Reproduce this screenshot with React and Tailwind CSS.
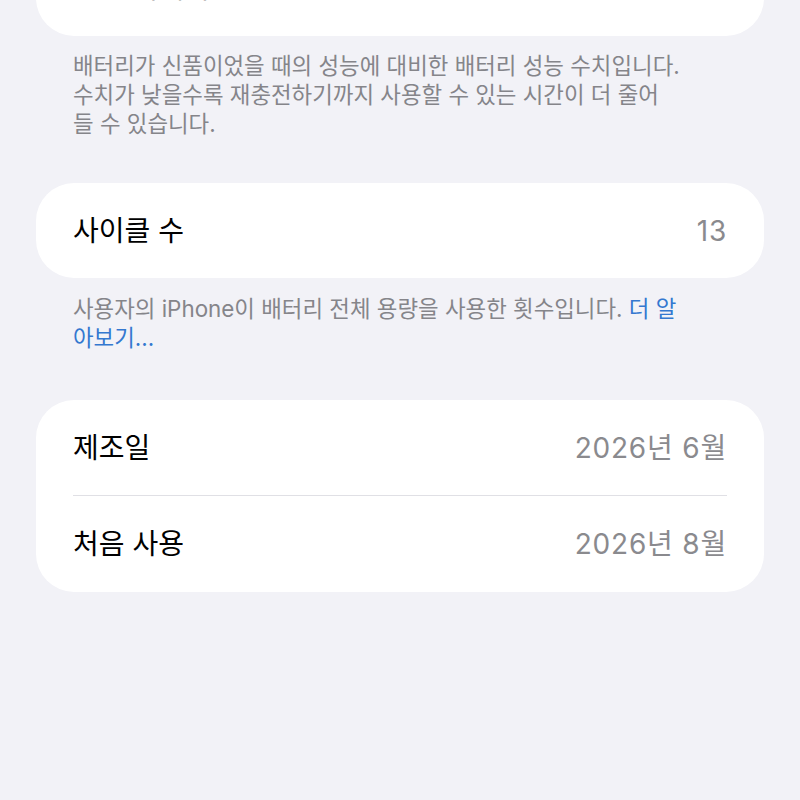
export default function App() {
  const font = { fontFamily: 'Inter, "Noto Sans CJK KR", sans-serif' }

  return (
    <div className="w-[800px] h-[800px] overflow-hidden bg-[#f2f2f7] px-[36px]" style={font}>
      {/* Peak performance card (cut off at top) */}
      <div className="-mt-[60px] bg-white rounded-[38px] h-[96px] px-[37px] flex items-center justify-between">
        <span className="text-[28px] text-black">성능 최대치</span>
        <span className="text-[28px] tracking-[0.8px] text-[#8a8a8e]">100%</span>
      </div>
      <p className="mt-[15px] px-[37px] text-[22.4px] leading-[29px] text-[#85858a] whitespace-nowrap">
        배터리가 신품이었을 때의 성능에 대비한 배터리 성능 수치입니다.<br />
        수치가 낮을수록 재충전하기까지 사용할 수 있는 시간이 더 줄어<br />
        들 수 있습니다.
      </p>

      {/* Cycle count */}
      <div className="mt-[45px] bg-white rounded-[38px] h-[95px] px-[37px] flex items-center justify-between">
        <span className="text-[28px] text-black">사이클 수</span>
        <span className="text-[28px] tracking-[0.8px] text-[#8a8a8e]">13</span>
      </div>
      <p className="mt-[16px] px-[37px] text-[22.4px] leading-[29px] text-[#85858a] whitespace-nowrap">
        사용자의 iPhone이 배터리 전체 용량을 사용한 횟수입니다. <span className="text-[#3478d0]">더 알</span><br />
        <span className="text-[#3478d0]">아보기...</span>
      </p>

      {/* Dates */}
      <div className="mt-[48px] bg-white rounded-[38px] px-[37px]">
        <div className="h-[95px] flex items-center justify-between">
          <span className="text-[28px] text-black">제조일</span>
          <span className="text-[28px] tracking-[0.8px] text-[#8a8a8e]">2026년 6월</span>
        </div>
        <div className="h-px bg-[#e0e0e5]" />
        <div className="h-[96px] flex items-center justify-between">
          <span className="text-[28px] text-black">처음 사용</span>
          <span className="text-[28px] tracking-[0.8px] text-[#8a8a8e]">2026년 8월</span>
        </div>
      </div>
    </div>
  )
}
